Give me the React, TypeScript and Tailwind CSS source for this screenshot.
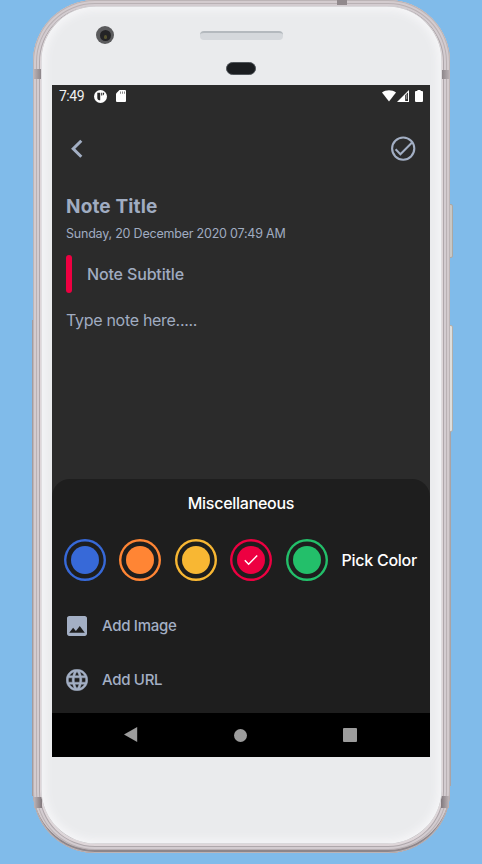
import React from "react";

const swatches = [
  { ring: "shadow-[inset_0_0_0_2.4px_#3769d8]", fill: "bg-[#3769d8]", selected: false },
  { ring: "shadow-[inset_0_0_0_2.4px_#ff8534]", fill: "bg-[#ff8534]", selected: false },
  { ring: "shadow-[inset_0_0_0_2.4px_#f8b733]", fill: "bg-[#f8b733]", selected: false },
  { ring: "shadow-[inset_0_0_0_2.4px_#ed0041]", fill: "bg-[#ed0041]", selected: true },
  { ring: "shadow-[inset_0_0_0_2.4px_#23bf6a]", fill: "bg-[#23bf6a]", selected: false },
];

function StatusBar() {
  return (
    <div className="flex h-[22px] shrink-0 items-center pl-[7px] pr-[7px] font-[Roboto,sans-serif] text-white">
      <span className="w-[35px] text-[14px] leading-[22px] tracking-[-0.5px] text-[#f0f0f0]">7:49</span>
      <svg className="h-[13px] w-[13px]" viewBox="0 0 13 13">
        <circle cx="6.5" cy="6.5" r="6.5" fill="#fff" />
        <path d="M3.3 2.8h2.9v7.5c-1.6 0-2.9-.5-2.9-2.3zM7 2.8h.8v2.6H7zM8.7 2.8h1.5c0 1.6-.4 2.5-1.5 2.6z" fill="#2b2b2b" />
      </svg>
      <svg className="ml-[9px] h-[12px] w-[10px]" viewBox="0 0 10 12">
        <path d="M3.5 0H9q1 0 1 1v10q0 1-1 1H1q-1 0-1-1V3.5z" fill="#fff" />
        <path d="M4 1.5h1v2.2H4zM6 1.5h1v2.2H6zM8 1.5h1v2.2H8z" fill="#888" />
      </svg>
      <div className="ml-auto flex items-center">
        <svg className="h-[12px] w-[14px]" viewBox="0 0 14 12">
          <path d="M0 2.5C3.8-.5 10.2-.5 14 2.5L7 11.5z" fill="#fff" />
        </svg>
        <svg className="ml-px h-[12px] w-[12px]" viewBox="0 0 12 12">
          <path d="M12 0v12H0z" fill="#fff" />
          <path d="M8.2 5.3 11 2.5v8.5H8.2z" fill="#2b2b2b" />
          <path d="M9.2 4.3h1v5h-1z" fill="#aaa" />
        </svg>
        <svg className="ml-[6px] h-[12px] w-[8px]" viewBox="0 0 8 12">
          <path d="M2.4 0h3.2v1.1H7q1 0 1 1V11q0 1-1 1H1q-1 0-1-1V2.1q0-1 1-1h1.4z" fill="#fff" />
        </svg>
      </div>
    </div>
  );
}

function Header() {
  return (
    <div className="mt-[25px] flex h-[32px] shrink-0 items-center justify-between pl-[18px] pr-[14px]">
      <svg className="h-[20px] w-[13px]" viewBox="0 0 13 20" fill="none" stroke="#a3afc4" strokeWidth="3">
        <path d="M11.3 2.7 3.2 10.7l8.1 8" />
      </svg>
      <svg className="h-[26px] w-[26px]" viewBox="0 0 26 26" fill="none" stroke="#a3afc4">
        <circle cx="13.2" cy="13.6" r="11.1" strokeWidth="2.1" />
        <path d="m5.6 14.2 4.8 5L21.8 7.8" strokeWidth="2" />
      </svg>
    </div>
  );
}

function Sheet() {
  return (
    <section className="mt-auto h-[234px] shrink-0 rounded-t-[18px] bg-[#1e1e1e] text-white">
      <h2 className="pt-[14px] text-center text-[16px] font-medium leading-[20px] tracking-[-0.27px]">Miscellaneous</h2>
      <div className="mt-[26px] flex items-center gap-[13.6px] pl-[11.6px]">
        {swatches.map((s) => (
          <div key={s.fill} className={`flex h-[42px] w-[42px] shrink-0 items-center justify-center rounded-full ${s.ring}`}>
            <div className={`flex h-[28px] w-[28px] shrink-0 items-center justify-center rounded-full ${s.fill}`}>
              {s.selected && (
                <svg className="h-[12px] w-[14px]" viewBox="0 0 14 12" fill="none" stroke="#fff" strokeWidth="1.5">
                  <path d="m.8 6.3 3.8 3.9L13.2 1.5" />
                </svg>
              )}
            </div>
          </div>
        ))}
        <span className="whitespace-nowrap text-[16px] font-medium tracking-[-0.27px]">Pick Color</span>
      </div>
      <div className="mt-[34px] flex h-[22px] items-center pl-[15px] text-[#a3afc4]">
        <svg className="h-[20px] w-[20px]" viewBox="3 3 18 18" fill="currentColor">
          <path d="M21 19V5c0-1.1-.9-2-2-2H5c-1.1 0-2 .9-2 2v14c0 1.1.9 2 2 2h14c1.1 0 2-.9 2-2zM8.5 13.5l2.5 3.01L14.5 12l4.5 6H5l3.5-4.5z" />
        </svg>
        <span className="ml-[15px] pt-px text-[15px] font-medium tracking-[-0.3px]">Add Image</span>
      </div>
      <div className="mt-[32px] flex h-[22px] items-center pl-[14px] text-[#a3afc4]">
        <svg className="h-[22px] w-[22px]" viewBox="1.8 1.8 20.4 20.4" fill="currentColor" stroke="currentColor" strokeWidth="0.4">
          <path d="M11.99 2C6.47 2 2 6.48 2 12s4.47 10 9.99 10C17.52 22 22 17.52 22 12S17.52 2 11.99 2zm6.93 6h-2.95c-.32-1.25-.78-2.45-1.38-3.56 1.84.63 3.37 1.91 4.33 3.56zM12 4.04c.83 1.2 1.48 2.53 1.91 3.96h-3.82c.43-1.43 1.08-2.76 1.91-3.96zM4.26 14C4.1 13.36 4 12.69 4 12s.1-1.36.26-2h3.38c-.08.66-.14 1.32-.14 2s.06 1.34.14 2H4.26zm.82 2h2.95c.32 1.25.78 2.45 1.38 3.56-1.84-.63-3.37-1.9-4.33-3.56zm2.95-8H5.08c.96-1.66 2.49-2.93 4.33-3.56C8.81 5.55 8.35 6.75 8.03 8zM12 19.96c-.83-1.2-1.48-2.53-1.91-3.96h3.82c-.43 1.43-1.08 2.76-1.91 3.96zM14.34 14H9.66c-.09-.66-.16-1.32-.16-2s.07-1.35.16-2h4.68c.09.65.16 1.32.16 2s-.07 1.34-.16 2zm.25 5.56c.6-1.11 1.06-2.31 1.38-3.56h2.95c-.96 1.65-2.49 2.93-4.33 3.56zM16.36 14c.08-.66.14-1.32.14-2s-.06-1.34-.14-2h3.38c.16.64.26 1.31.26 2s-.1 1.36-.26 2h-3.38z" />
        </svg>
        <span className="ml-[14px] text-[15px] font-medium tracking-[-0.3px]">Add URL</span>
      </div>
    </section>
  );
}

function NavBar() {
  return (
    <div className="flex h-[44px] shrink-0 items-center bg-black pl-[72px]">
      <svg className="h-[16px] w-[14px]" viewBox="0 0 14 16">
        <path d="M13.2 0v15L0 7.6z" fill="#9c9c9c" />
      </svg>
      <div className="ml-[96px] h-[13px] w-[13px] rounded-full bg-[#9c9c9c]" />
      <div className="ml-[96px] h-[14px] w-[14px] rounded-[1px] bg-[#9c9c9c]" />
    </div>
  );
}

export default function App() {
  return (
    <main className="relative h-[864px] w-[482px] overflow-hidden bg-[#80bbea] font-[Inter,sans-serif]">
      {/* Side keys and frame edges */}
      <div className="absolute left-[448px] top-[204px] h-[54px] w-[5px] rounded-r-[2px] border border-[#aaa8a4] bg-[#c8c7c5]" />
      <div className="absolute left-[448px] top-[325px] h-[107px] w-[5px] rounded-r-[2px] border border-[#b0afac] bg-[#dededc]" />
      <div className="absolute left-[32px] top-[320px] h-[476px] w-[2px] bg-[#a39b9e]" />
      <div className="absolute left-[449px] top-[432px] h-[354px] w-[2px] bg-[#aaa3a5]" />
      <div className="absolute left-[93px] top-0 h-[2px] w-[293px] bg-[#a89fa2]" />

      <div className="relative ml-[33px] h-[853px] w-[417px] rounded-[62px] bg-[#ded6d9] px-[8px] pb-[9px] pt-[6px] shadow-[inset_0_0_0_1px_#bcb4b6,inset_0_-3px_0_0_#8e868a,inset_0_0_0_3px_#d3cbce,inset_0_0_0_4px_#b9b1b4,inset_0_0_0_6px_#d3ccd0,inset_0_0_0_7px_#aea7ab]">
        {/* Antenna bands */}
        <div className="absolute left-[1px] top-[69px] h-[10px] w-[7px] bg-linear-to-r from-[#b9b1b4] to-[#8d868a]" />
        <div className="absolute right-0 top-[70px] h-[9px] w-[8px] bg-linear-to-r from-[#8d868a] to-[#bdb5b8]" />
        <div className="absolute left-[304px] top-0 h-[5px] w-[10px] bg-[#91898c]" />
        <div className="absolute left-[1px] top-[797px] h-[11px] w-[8px] bg-linear-to-r from-[#bbb3b7] to-[#81787c]" />
        <div className="absolute right-[1px] top-[796px] h-[12px] w-[8px] bg-linear-to-r from-[#81787c] to-[#bdb5b8]" />

        <div className="relative flex h-[838px] w-[401px] flex-col rounded-[55px] bg-[#eaebed] px-[11px] shadow-[inset_0_0_0_0.4px_#c0bcbf,inset_0_0_8px_4px_#f6f6f8]">
          {/* Camera, speaker and sensor */}
          <div className="absolute left-[55px] top-[20px] flex h-[18px] w-[18px] items-center justify-center rounded-full bg-[#5b5b5d]">
            <div className="flex h-[11px] w-[11px] items-center justify-center rounded-full bg-[#242426]">
              <div className="mt-[3px] h-[4px] w-[3px] rounded-full bg-[#55522f]" />
            </div>
          </div>
          <div className="absolute left-[159px] top-[25px] h-[9px] w-[83px] rounded-[4px] border-t-2 border-[#b4b9be] bg-[#d5d8dc]" />
          <div className="absolute left-[185px] top-[56px] h-[13px] w-[30px] rounded-full border border-[#50555a] bg-[#1b1d20]" />

          <div className="mt-[79px] flex h-[672px] w-[378px] flex-col bg-[#2b2b2b] text-[#a0acc1]">
            <StatusBar />
            <Header />
            <div className="flex flex-col pl-[14px]">
              <h1 className="mt-[31px] text-[19px] font-bold leading-[24px] tracking-[0.15px]">Note Title</h1>
              <p className="mt-[7px] text-[12.5px] leading-[16px] tracking-[-0.21px]">Sunday, 20 December 2020 07:49 AM</p>
              <div className="mt-[13px] flex h-[38px] items-center">
                <div className="h-[38px] w-[6px] rounded-full bg-[#ed0041]" />
                <span className="ml-[15px] text-[16px] font-medium tracking-[-0.15px]">Note Subtitle</span>
              </div>
              <p className="mt-[17px] text-[16px] leading-[20px] tracking-[-0.3px]">Type note here.....</p>
            </div>
            <Sheet />
            <NavBar />
          </div>
        </div>
      </div>
    </main>
  );
}
